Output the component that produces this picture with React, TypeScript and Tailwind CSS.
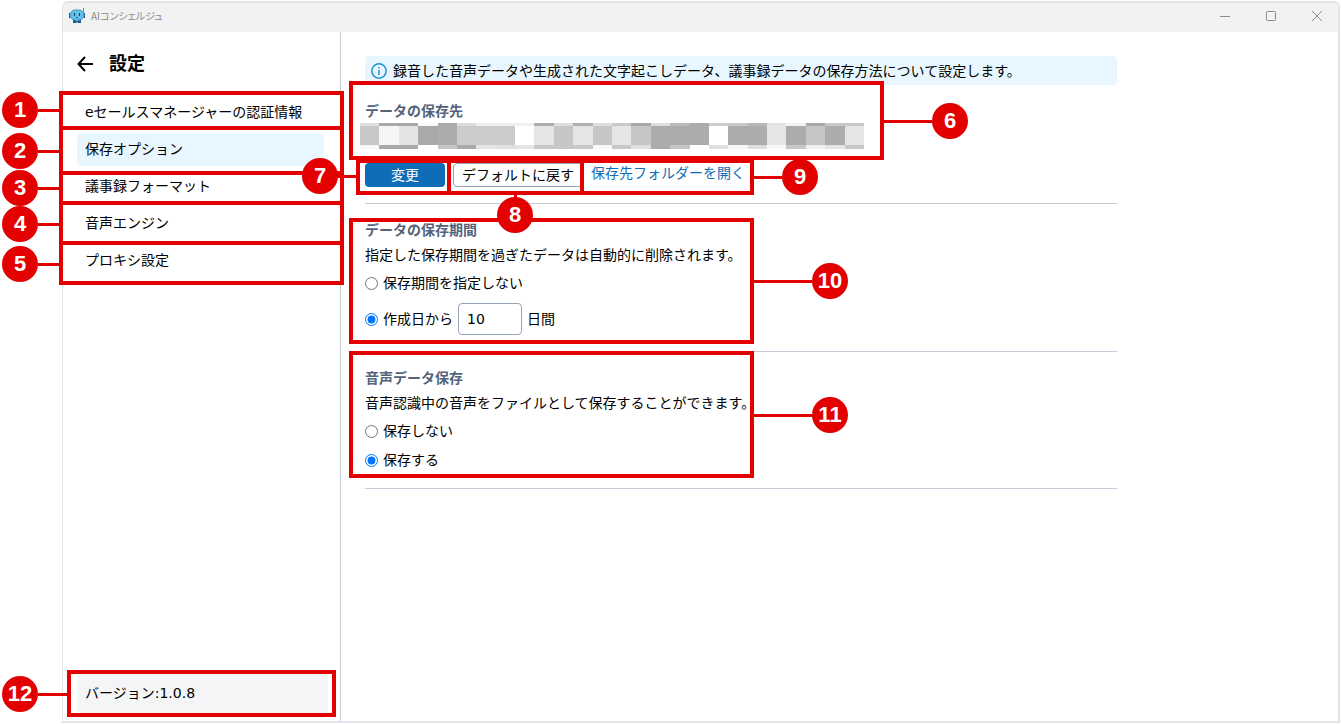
import React, { useState } from 'react';
import { clsx } from 'clsx';

const NAV_ITEMS = [
  'eセールスマネージャーの認証情報',
  '保存オプション',
  '議事録フォーマット',
  '音声エンジン',
  'プロキシ設定',
];

// Redacted folder path: one row of cells per band, top to bottom
const MOSAIC = [
  { y: 0, h: 3, cells: 'e0 a9 a9 fa aa dc f0 f0 f0 ac de b0 de c8 a8 de bb aa cd c8 b8 e4 f4 aa c8 c8' },
  { y: 3, h: 19, cells: 'c8 f6 e3 a9 ac cb cb cb ff e5 c6 e5 c6 e5 c6 ac ac ac ff ac ac e5 ac c6 ac e5' },
  { y: 22, h: 4, cells: 'f8 a9 a9 ff c6 aa e4 e0 e4 c8 c8 c8 f8 c8 e0 aa c4 ff e0 f4 de f8 c8 f0 e4 c8' },
];

const FRAMES = [
  'left-[59px] top-[91px] w-[285px] h-[39px]',
  'left-[59px] top-[126px] w-[285px] h-[49px]',
  'left-[59px] top-[171px] w-[285px] h-[34px]',
  'left-[59px] top-[201px] w-[285px] h-[44px]',
  'left-[59px] top-[241px] w-[285px] h-[44px]',
  'left-[349px] top-[81px] w-[535px] h-[79px]',
  'left-[356px] top-[159px] w-[95px] h-[36px]',
  'left-[447px] top-[159px] w-[137px] h-[36px]',
  'left-[580px] top-[159px] w-[174px] h-[36px]',
  'left-[349px] top-[218px] w-[405px] h-[126px]',
  'left-[349px] top-[351px] w-[405px] h-[127px]',
  'left-[67px] top-[670px] w-[269px] h-[47px]',
];

const MARKERS = [
  { at: 'left-[2px] top-[92px]', line: 'left-[38px] top-[109px] w-[22px] h-[3px]' },
  { at: 'left-[2px] top-[133px]', line: 'left-[38px] top-[150px] w-[22px] h-[3px]' },
  { at: 'left-[2px] top-[170px]', line: 'left-[38px] top-[187px] w-[22px] h-[3px]' },
  { at: 'left-[2px] top-[206px]', line: 'left-[38px] top-[223px] w-[22px] h-[3px]' },
  { at: 'left-[2px] top-[246px]', line: 'left-[38px] top-[263px] w-[22px] h-[3px]' },
  { at: 'left-[932px] top-[103px]', line: 'left-[884px] top-[120px] w-[50px] h-[3px]' },
  { at: 'left-[302px] top-[158px]', line: 'left-[336px] top-[175px] w-[22px] h-[3px]' },
  { at: 'left-[497px] top-[197px]', line: 'left-[514px] top-[194px] w-[3px] h-[6px]' },
  { at: 'left-[782px] top-[159px]', line: 'left-[752px] top-[176px] w-[32px] h-[3px]' },
  { at: 'left-[812px] top-[263px]', line: 'left-[752px] top-[280px] w-[62px] h-[3px]' },
  { at: 'left-[812px] top-[397px]', line: 'left-[752px] top-[414px] w-[62px] h-[3px]' },
  { at: 'left-[2px] top-[676px]', line: 'left-[38px] top-[693px] w-[31px] h-[3px]' },
];

const RobotIcon = () => (
  <svg className="h-4 w-4" viewBox="0 0 16 16" aria-hidden="true">
    <rect x="0" y="5" width="2" height="5" fill="#1c4f7c" />
    <rect x="14" y="5" width="2" height="5" fill="#1c4f7c" />
    <rect x="1" y="2" width="14" height="10" rx="5" fill="#62c0e6" stroke="#3f9fcc" strokeWidth="1" />
    <path d="M4 11.500l4 1.500 4-1.500v3.500H9l-1-1-1 1H4z" fill="#1c5d96" />
    <rect x="5" y="5" width="1" height="3" fill="#1c3f5c" />
    <rect x="10" y="5" width="1" height="3" fill="#1c3f5c" />
    <path d="M7 9.500h2" stroke="#1c5d96" />
    <path d="M14.500 0v5" stroke="#e0507a" strokeWidth="1" />
  </svg>
);

const TitleBar = () => (
  <header className="flex h-[29px] shrink-0 items-center bg-[#f2f2f2] pb-[3px] pl-1.5 text-[#8a8a8a]">
    <RobotIcon />
    <span className="ml-1.5 flex-1 text-[10px] leading-4 font-['Noto_Sans_CJK_JP',sans-serif] [font-feature-settings:'palt']">
      AIコンシェルジュ
    </span>
    <div className="flex items-center gap-[34px] pr-[15px]">
      <button type="button" aria-label="最小化">
        <svg className="h-3 w-3" viewBox="0 0 12 12" fill="none" stroke="currentColor">
          <path d="M1 6.500h10" />
        </svg>
      </button>
      <button type="button" aria-label="最大化">
        <svg className="h-3 w-3" viewBox="0 0 12 12" fill="none" stroke="currentColor">
          <rect x="1.500" y="1.500" width="9" height="9" rx="1" />
        </svg>
      </button>
      <button type="button" aria-label="閉じる">
        <svg className="h-3 w-3" viewBox="0 0 12 12" fill="none" stroke="currentColor">
          <path d="M1 1l10 10M11 1L1 11" />
        </svg>
      </button>
    </div>
  </header>
);

const Sidebar = () => (
  <aside className="flex w-[278px] shrink-0 flex-col border-r border-[#c5ccda] pl-[14px]">
    <div className="flex h-16 items-center gap-4">
      <button type="button" aria-label="戻る">
        <svg className="h-4 w-4" viewBox="0 0 16 16" fill="none" stroke="#000" strokeWidth="2">
          <path d="M16 8H1.500M8 1L1.500 8L8 15" />
        </svg>
      </button>
      <h1 className="text-lg leading-6 font-bold">設定</h1>
    </div>
    <nav className="flex flex-col gap-1 pr-4">
      {NAV_ITEMS.map((item, i) => (
        <a key={item} href="#" className={clsx('rounded px-2 py-1.5 leading-[21px]', i === 1 && 'bg-[#e8f7ff]')}>
          {item}
        </a>
      ))}
    </nav>
    <div className="mt-auto mr-3 mb-2 bg-[#f4f5f7] px-2 py-2 leading-6">バージョン:1.0.8</div>
  </aside>
);

const Mosaic = () => (
  <svg className="-ml-[5px] h-[26px] w-[504px]" viewBox="0 0 26 26" preserveAspectRatio="none" shapeRendering="crispEdges" aria-hidden="true">
    {MOSAIC.map((row) =>
      row.cells.split(' ').map((c, i) => (
        <rect key={`${row.y}-${i}`} x={i} y={row.y} width="1" height={row.h} fill={`#${c}${c}${c}`} />
      )),
    )}
  </svg>
);

interface OptionProps {
  name: string;
  label: string;
  checked: boolean;
  onSelect: () => void;
}

const Option = ({ name, label, checked, onSelect }: OptionProps) => (
  <label className="flex items-center gap-[5px] leading-5">
    <input type="radio" name={name} checked={checked} onChange={onSelect} className="h-[13px] w-[13px]" />
    {label}
  </label>
);

const SectionTitle = ({ children }: { children: React.ReactNode }) => (
  <h2 className="leading-5 font-bold text-[#55637a]">{children}</h2>
);

const SaveOptions = () => {
  const [limited, setLimited] = useState(true);
  const [days, setDays] = useState('10');
  const [keepAudio, setKeepAudio] = useState(true);

  return (
    <main className="flex-1 px-6 pt-6">
      <div className="max-w-[752px]">
        <p className="flex h-[29px] items-center gap-1.5 rounded bg-[#e8f7ff] px-1.5">
          <svg className="h-4 w-4" viewBox="0 0 16 16" fill="none" stroke="#1b8fd6" strokeWidth="1.500" aria-hidden="true">
            <circle cx="8" cy="8" r="7.200" />
            <path d="M8 7v5M8 4v1.600" />
          </svg>
          録音した音声データや生成された文字起こしデータ、議事録データの保存方法について設定します。
        </p>

        <section className="border-b border-[#c5ccda] pt-4 pb-4">
          <SectionTitle>データの保存先</SectionTitle>
          <div className="pt-0.5">
            <Mosaic />
          </div>
          <div className="mt-3.5 flex items-center">
            <button type="button" className="h-6 w-20 rounded bg-[#0f6cb6] text-white">
              変更
            </button>
            <button type="button" className="ml-2 h-6 rounded border border-[#94a3b8] px-2 leading-5">
              デフォルトに戻す
            </button>
            <a href="#" className="ml-2 pb-1 leading-5 text-[#0f6cb6]">
              保存先フォルダーを開く
            </a>
          </div>
        </section>

        <section className="border-b border-[#c5ccda] pt-4 pb-4">
          <SectionTitle>データの保存期間</SectionTitle>
          <p className="mt-[5px] leading-5">指定した保存期間を過ぎたデータは自動的に削除されます。</p>
          <div className="mt-2">
            <Option name="period" label="保存期間を指定しない" checked={!limited} onSelect={() => setLimited(false)} />
          </div>
          <div className="mt-2.5 flex items-center gap-[5px]">
            <Option name="period" label="作成日から" checked={limited} onSelect={() => setLimited(true)} />
            <input
              type="text"
              aria-label="保存日数"
              value={days}
              onChange={(e) => setDays(e.target.value)}
              className="h-8 w-16 rounded border border-[#94a3b8] px-2"
            />
            <span>日間</span>
          </div>
        </section>

        <section className="border-b border-[#c5ccda] pt-4 pb-[18px]">
          <SectionTitle>音声データ保存</SectionTitle>
          <p className="mt-[5px] leading-5">音声認識中の音声をファイルとして保存することができます。</p>
          <div className="mt-2 flex flex-col gap-[9px]">
            <Option name="audio" label="保存しない" checked={!keepAudio} onSelect={() => setKeepAudio(false)} />
            <Option name="audio" label="保存する" checked={keepAudio} onSelect={() => setKeepAudio(true)} />
          </div>
        </section>
      </div>
    </main>
  );
};

// Numbered guide laid over the window
const Callouts = () => (
  <div className="pointer-events-none absolute inset-0">
    {FRAMES.map((frame) => (
      <div key={frame} className={clsx('absolute border-4 border-[#e20000]', frame)} />
    ))}
    {MARKERS.map((m, i) => (
      <React.Fragment key={m.at}>
        <div className={clsx('absolute bg-[#e20000]', m.line)} />
        <div
          className={clsx(
            "absolute flex h-9 w-9 items-center justify-center rounded-full bg-[#e20000] text-[22px] leading-6 font-bold text-white font-['Liberation_Sans',sans-serif]",
            m.at,
          )}
        >
          {i + 1}
        </div>
      </React.Fragment>
    ))}
  </div>
);

export default function App() {
  return (
    <div className="relative flex min-h-screen bg-white pt-px pr-px pb-px pl-[62px] text-sm text-black font-['DejaVu_Sans','Noto_Sans_CJK_JP',sans-serif]">
      <div className="flex flex-1 flex-col overflow-hidden rounded-t-md border-2 border-l border-[#dfe5ea]">
        <TitleBar />
        <div className="flex flex-1">
          <Sidebar />
          <SaveOptions />
        </div>
      </div>
      <Callouts />
    </div>
  );
}
